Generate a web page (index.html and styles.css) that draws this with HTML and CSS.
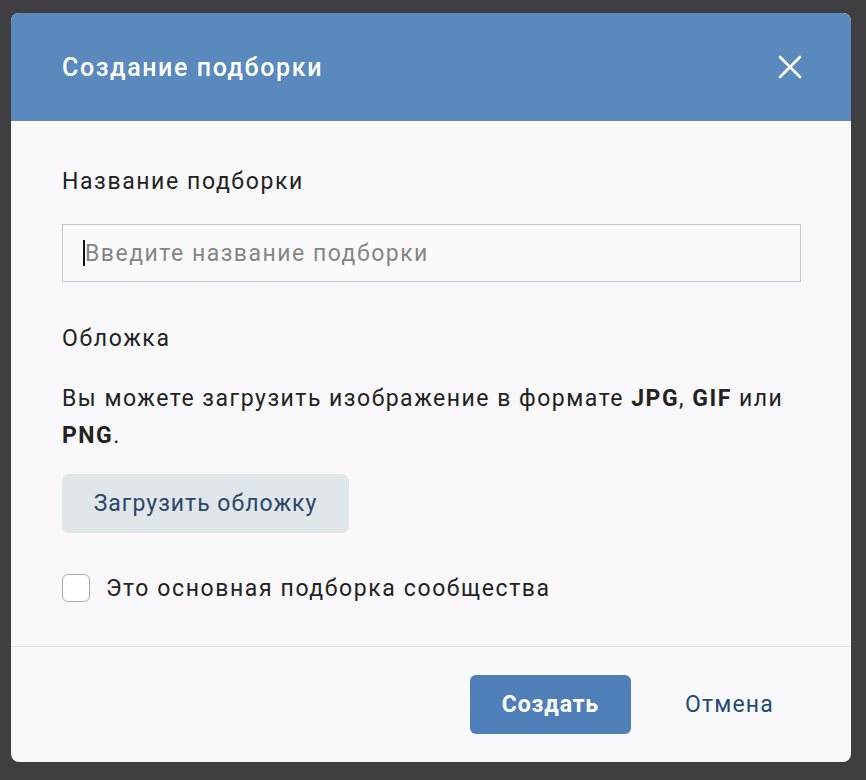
FILE: index.html
```html
<!doctype html>
<html lang="ru">
  <head>
    <meta charset="utf-8">
    <link rel="stylesheet" href="styles.css">
  </head>
  <body>
    <div class="dialog">
      <div class="dialog_head">
        <div class="dialog_title">Создание подборки</div>
        <svg class="close_btn" width="24" height="24" viewBox="0 0 24 24">
          <path d="M2 2 L22 22 M22 2 L2 22" stroke="#fff" stroke-width="2.6" stroke-linecap="round"/>
        </svg>
      </div>
      <div class="dialog_body">
        <div class="field_label">Название подборки</div>
        <div class="text_input"><span class="caret"></span><span class="placeholder">Введите название подборки</span></div>
        <div class="field_label cover_label">Обложка</div>
        <p class="hint">Вы можете загрузить изображение в формате <b>JPG</b>, <b>GIF</b> или <b>PNG</b>.</p>
        <button class="upload_btn">Загрузить обложку</button>
        <label class="check_row">
          <span class="check_box"></span>
          <span>Это основная подборка сообщества</span>
        </label>
      </div>
      <div class="dialog_foot">
        <button class="create_btn">Создать</button>
        <span class="cancel_link">Отмена</span>
      </div>
    </div>
  </body>
</html>
```
FILE: styles.css
```css
body {
  margin: 0;
  background-color: #3f3f41;
  font-family: Roboto, "Liberation Sans", sans-serif;
}

.dialog {
  margin: 13px 15px 18px 11px;
  height: 749px;
  background-color: #f9f9fb;
  border-radius: 8px;
  overflow: hidden;
  display: flex;
  flex-direction: column;
}

.dialog_head {
  height: 108px;
  background-color: #5a89be;
  display: flex;
  align-items: center;
  justify-content: space-between;
  padding: 0 49px 0 51px;
}

.dialog_title {
  color: #fff;
  font-size: 25px;
  font-weight: 500;
  letter-spacing: 1.6px;
}

.close_btn {
  display: block;
}

.dialog_body {
  padding: 47px 50px 0 51px;
  flex: 1;
  border-bottom: 1px solid #e1e3e7;
}

.field_label {
  font-size: 23px;
  color: #222;
  line-height: 28px;
  letter-spacing: 1.6px;
}

.text_input {
  margin-top: 28px;
  height: 56px;
  border: 1px solid #c4c6ca;
  background-color: #fbfbfc;
  display: flex;
  align-items: center;
  padding-left: 20px;
}

.caret {
  width: 2px;
  height: 26px;
  background-color: #111;
}

.placeholder {
  font-size: 23px;
  color: #858588;
  letter-spacing: 1.5px;
}

.cover_label {
  margin-top: 43px;
}

.hint {
  margin: 27px 0 0;
  font-size: 23px;
  line-height: 37px;
  color: #222;
  letter-spacing: 1.5px;
}

.hint b {
  font-weight: 700;
}

.upload_btn {
  margin-top: 20px;
  width: 287px;
  height: 59px;
  border: none;
  border-radius: 7px;
  background-color: #e0e6ea;
  color: #2b4768;
  font-family: inherit;
  font-size: 23px;
  letter-spacing: 1px;
}

.check_row {
  margin-top: 41px;
  display: flex;
  align-items: center;
  gap: 16px;
  font-size: 23px;
  color: #222;
  letter-spacing: 1.6px;
}

.check_box {
  width: 26px;
  height: 26px;
  border: 1.5px solid #a9abae;
  border-radius: 6px;
  background-color: #fff;
}

.dialog_foot {
  height: 115px;
  display: flex;
  align-items: center;
  justify-content: flex-end;
  padding-right: 77px;
}

.create_btn {
  width: 161px;
  height: 59px;
  border: none;
  border-radius: 6px;
  background-color: #4e7fb9;
  color: #fff;
  font-family: inherit;
  font-size: 23px;
  font-weight: 700;
  letter-spacing: 0.9px;
  margin-right: 54px;
}

.cancel_link {
  font-size: 23px;
  color: #234b78;
  letter-spacing: 1.2px;
}
```
